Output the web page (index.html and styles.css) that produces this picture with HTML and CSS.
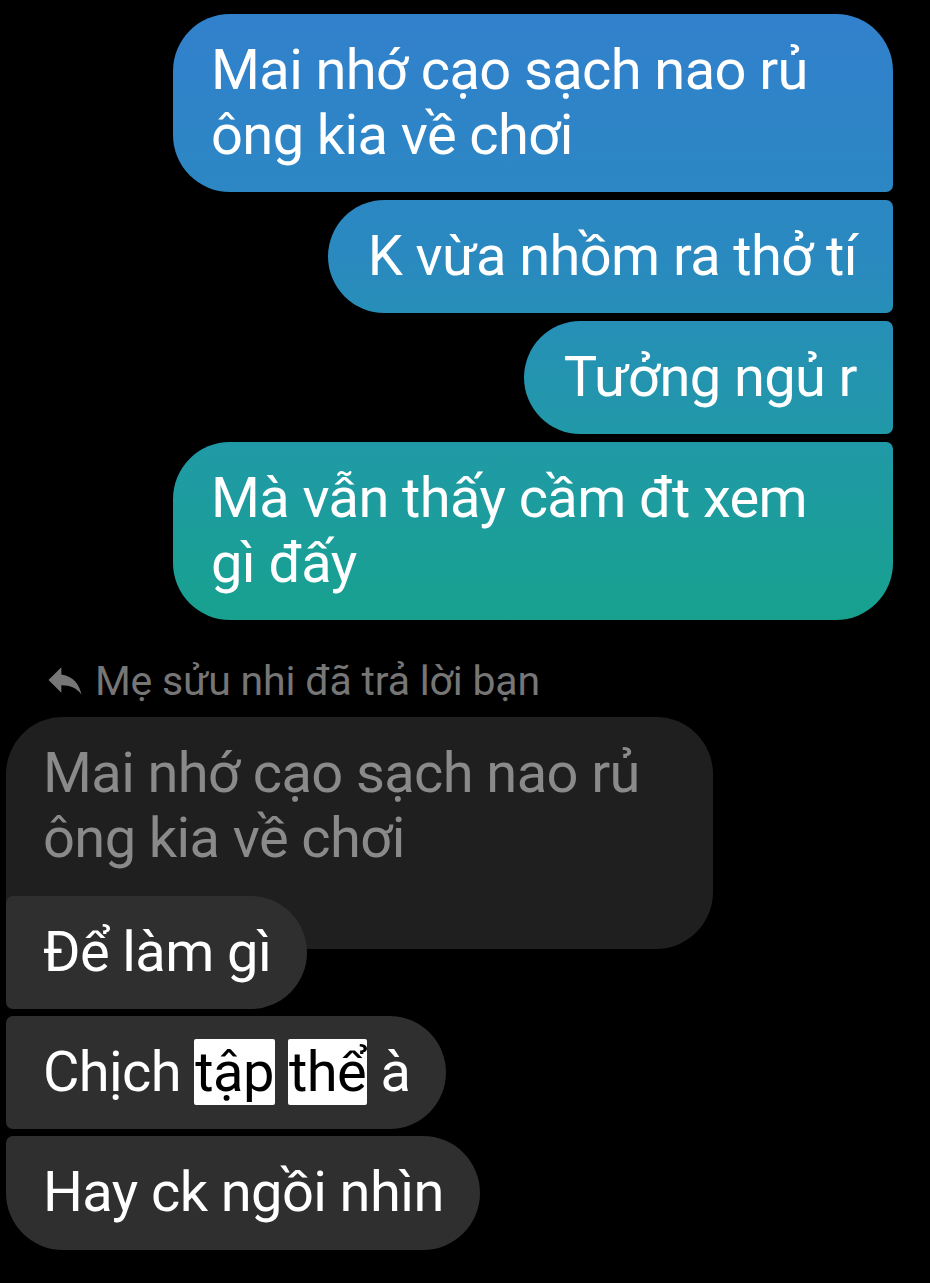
FILE: index.html
```html
<!DOCTYPE html>
<html lang="vi">
<head>
<meta charset="utf-8">
<link rel="stylesheet" href="styles.css">
</head>
<body>
<div class="chat">
  <div class="bubble out out-first">Mai nhớ cạo sạch nao rủ ông kia về chơi</div>
  <div class="bubble out out-mid">K vừa nhồm ra thở tí</div>
  <div class="bubble out out-mid">Tưởng ngủ r</div>
  <div class="bubble out out-last">Mà vẫn thấy cầm đt xem gì đấy</div>

  <div class="reply-label">
    <svg class="reply-icon" viewBox="0 0 24 24" width="44" height="44"><path d="M10 9V5l-7 7 7 7v-4.1c5 0 8.5 1.6 11 5.1-1-5-4-10-11-11z" fill="#767676"/></svg>
    <span>Mẹ sửu nhi đã trả lời bạn</span>
  </div>
  <div class="bubble quoted">Mai nhớ cạo sạch nao rủ ông kia về chơi</div>
  <div class="bubble in in-first">Để làm gì</div>
  <div class="bubble in in-mid">Chịch <span class="hl">tập</span> <span class="hl">thể</span> à</div>
  <div class="bubble in in-last">Hay ck ngồi nhìn</div>
</div>
</body>
</html>
```
FILE: styles.css
```css
html, body {
  margin: 0;
  padding: 0;
  background: #000;
}
body {
  width: 930px;
  height: 1283px;
  overflow: hidden;
  font-family: Roboto, "Noto Sans", "Liberation Sans", sans-serif;
}
.chat {
  display: flex;
  flex-direction: column;
  padding: 14px 37px 0 6px;
}
.bubble {
  box-sizing: border-box;
  font-size: 56px;
  line-height: 65px;
  letter-spacing: -0.6px;
  padding: 24px 36px 24px 38px;
  color: #fff;
}
.out {
  align-self: flex-end;
  max-width: 720px;
  background-image: linear-gradient(180deg, #3280cd 0px, #2a89c0 250px, #209aa6 450px, #17a18e 620px);
  background-attachment: fixed;
}
.out + .out { margin-top: 8px; }
.out-first { border-radius: 57px 57px 7px 57px; }
.out-mid { border-radius: 57px 7px 7px 57px; padding-left: 40px; }
.out-last { border-radius: 57px 7px 57px 57px; }

.reply-label {
  display: flex;
  align-items: center;
  margin: 37px 0 12px 37px;
  height: 48px;
  color: #767676;
  font-size: 41px;
  letter-spacing: -0.2px;
  line-height: 48px;
}
.reply-icon {
  margin-right: 8px;
  margin-top: -2px;
}
.quoted {
  align-self: flex-start;
  max-width: 707px;
  width: 707px;
  background: #1f1f1f;
  color: #8a8a8a;
  padding-bottom: 78px;
  padding-left: 37px;
  border-radius: 57px 57px 57px 7px;
}
.in {
  align-self: flex-start;
  background: #2f2f2f;
  padding-left: 37px;
  padding-right: 36px;
}
.in-first { margin-top: -53px; border-radius: 7px 57px 57px 7px; }
.in-mid { margin-top: 7px; border-radius: 7px 57px 57px 7px; }
.in-last { margin-top: 7px; border-radius: 7px 57px 57px 57px; padding-bottom: 25px; }
.hl {
  background: #fff;
  color: #000;
  border-radius: 2px;
  padding: 0 1px;
}
```
